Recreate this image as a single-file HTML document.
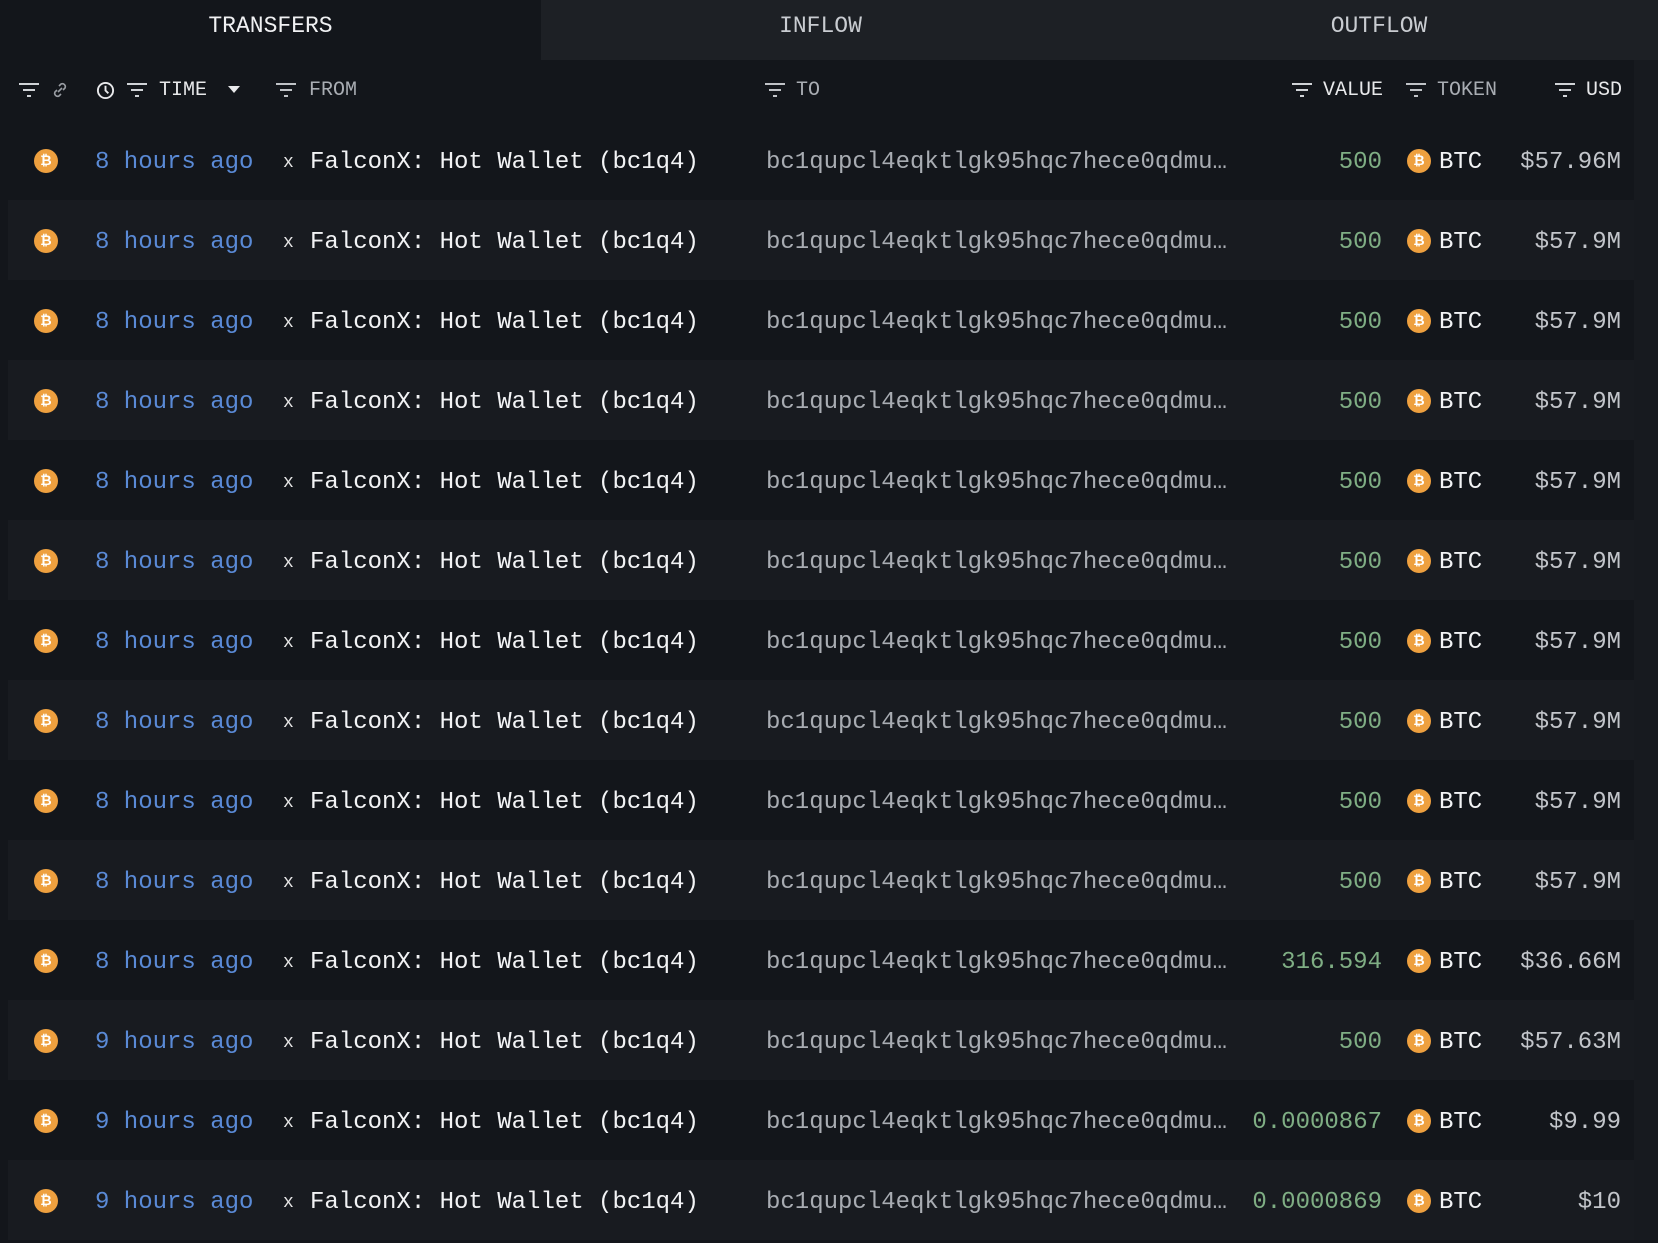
<!DOCTYPE html>
<html><head><meta charset="utf-8"><style>
*{margin:0;padding:0;box-sizing:border-box}
body{width:1658px;height:1240px;background:#13161b;overflow:hidden;position:relative;font-family:"Liberation Mono","DejaVu Sans Mono",monospace}
.tab{position:absolute;top:0;height:60px;line-height:52px;text-align:center;font-size:23px;color:#d8dade}
.t1{left:0;width:541px;background:#13161b;color:#f0f1f3}
.t2{left:541px;width:559px;background:#1d2025;color:#c9ccd1}
.t3{left:1100px;width:558px;background:#1d2025;color:#c9ccd1}
.strip{position:absolute;right:0;top:60px;width:24px;height:1180px;background:#171a1f}
.h{position:absolute;top:79px;font-size:20px;line-height:24px;color:#e8e9eb}
.hg{color:#a9adb3}
.fi{position:absolute;top:82px}
.row{position:absolute;left:0;width:1658px;height:80px;font-size:24px;line-height:80px;padding-top:3px}
.alt{background:#181b20;left:8px;width:1626px}
.row span{position:absolute;white-space:pre;top:3px}
.ic{position:absolute;width:24px;height:24px;border-radius:50%;background:#eea03f;top:29px;color:#fff;font:bold 14px/24px "DejaVu Sans",sans-serif;text-align:center}
.tm{color:#5a8ad6}
.x{font-size:18px;color:#e6e6e6}
.fr{color:#f2f3f5}
.to{color:#a8acb2}
.v{color:#7fae84;text-align:right}
.btc{color:#f2f3f5}
.usd{color:#c2c5ca;text-align:right}
</style></head><body>
<div class="tab t1">TRANSFERS</div>
<div class="tab t2">INFLOW</div>
<div class="tab t3">OUTFLOW</div>
<div class="strip"></div>

<svg class="fi" style="left:18px" width="22" height="16" viewBox="0 0 22 16"><g stroke="#d0d3d7" stroke-width="2"><line x1="1" y1="2" x2="21" y2="2"/><line x1="5" y1="8" x2="17" y2="8"/><line x1="9" y1="14" x2="13" y2="14"/></g></svg>
<svg class="fi" style="left:50px;top:80px" width="20" height="20" viewBox="0 0 20 20"><g fill="none" stroke="#9a9ea4" stroke-width="1.6"><path d="M8 12l4-4"/><path d="M9 6l2-2a3 3 0 0 1 4 4l-2 2"/><path d="M11 14l-2 2a3 3 0 0 1-4-4l2-2"/></g></svg>
<svg class="fi" style="left:96px;top:81px" width="19" height="19" viewBox="0 0 20 20"><g fill="none" stroke="#e8e9eb" stroke-width="2"><circle cx="10" cy="10" r="8"/><path d="M10 5v5l3 3"/></g></svg>
<svg class="fi" style="left:126px" width="22" height="16" viewBox="0 0 22 16"><g stroke="#d0d3d7" stroke-width="2"><line x1="1" y1="2" x2="21" y2="2"/><line x1="5" y1="8" x2="17" y2="8"/><line x1="9" y1="14" x2="13" y2="14"/></g></svg>
<div class="h" style="left:159px">TIME</div>
<svg class="fi" style="left:228px;top:86px" width="12" height="8" viewBox="0 0 12 8"><path d="M0 0h12L6 7z" fill="#e8e9eb"/></svg>
<svg class="fi" style="left:275px" width="22" height="16" viewBox="0 0 22 16"><g stroke="#c0c3c7" stroke-width="2"><line x1="1" y1="2" x2="21" y2="2"/><line x1="5" y1="8" x2="17" y2="8"/><line x1="9" y1="14" x2="13" y2="14"/></g></svg>
<div class="h hg" style="left:309px">FROM</div>
<svg class="fi" style="left:764px" width="22" height="16" viewBox="0 0 22 16"><g stroke="#c0c3c7" stroke-width="2"><line x1="1" y1="2" x2="21" y2="2"/><line x1="5" y1="8" x2="17" y2="8"/><line x1="9" y1="14" x2="13" y2="14"/></g></svg>
<div class="h hg" style="left:796px">TO</div>
<svg class="fi" style="left:1291px" width="22" height="16" viewBox="0 0 22 16"><g stroke="#d0d3d7" stroke-width="2"><line x1="1" y1="2" x2="21" y2="2"/><line x1="5" y1="8" x2="17" y2="8"/><line x1="9" y1="14" x2="13" y2="14"/></g></svg>
<div class="h" style="left:1323px">VALUE</div>
<svg class="fi" style="left:1405px" width="22" height="16" viewBox="0 0 22 16"><g stroke="#c0c3c7" stroke-width="2"><line x1="1" y1="2" x2="21" y2="2"/><line x1="5" y1="8" x2="17" y2="8"/><line x1="9" y1="14" x2="13" y2="14"/></g></svg>
<div class="h hg" style="left:1437px">TOKEN</div>
<svg class="fi" style="left:1554px" width="22" height="16" viewBox="0 0 22 16"><g stroke="#d0d3d7" stroke-width="2"><line x1="1" y1="2" x2="21" y2="2"/><line x1="5" y1="8" x2="17" y2="8"/><line x1="9" y1="14" x2="13" y2="14"/></g></svg>
<div class="h" style="left:1586px">USD</div>

<div class="row" style="top:120px"><div class="ic" style="left:34px">₿</div><span class="tm" style="left:95px">8 hours ago</span><span class="x" style="left:283px">x</span><span class="fr" style="left:310px">FalconX: Hot Wallet (bc1q4)</span><span class="to" style="left:766px">bc1qupcl4eqktlgk95hqc7hece0qdmu…</span><span class="v" style="right:276px">500</span><div class="ic" style="left:1407px">₿</div><span class="btc" style="left:1439px">BTC</span><span class="usd" style="right:37px">$57.96M</span></div>
<div class="row alt" style="top:200px"><div class="ic" style="left:26px">₿</div><span class="tm" style="left:87px">8 hours ago</span><span class="x" style="left:275px">x</span><span class="fr" style="left:302px">FalconX: Hot Wallet (bc1q4)</span><span class="to" style="left:758px">bc1qupcl4eqktlgk95hqc7hece0qdmu…</span><span class="v" style="right:252px">500</span><div class="ic" style="left:1399px">₿</div><span class="btc" style="left:1431px">BTC</span><span class="usd" style="right:13px">$57.9M</span></div>
<div class="row" style="top:280px"><div class="ic" style="left:34px">₿</div><span class="tm" style="left:95px">8 hours ago</span><span class="x" style="left:283px">x</span><span class="fr" style="left:310px">FalconX: Hot Wallet (bc1q4)</span><span class="to" style="left:766px">bc1qupcl4eqktlgk95hqc7hece0qdmu…</span><span class="v" style="right:276px">500</span><div class="ic" style="left:1407px">₿</div><span class="btc" style="left:1439px">BTC</span><span class="usd" style="right:37px">$57.9M</span></div>
<div class="row alt" style="top:360px"><div class="ic" style="left:26px">₿</div><span class="tm" style="left:87px">8 hours ago</span><span class="x" style="left:275px">x</span><span class="fr" style="left:302px">FalconX: Hot Wallet (bc1q4)</span><span class="to" style="left:758px">bc1qupcl4eqktlgk95hqc7hece0qdmu…</span><span class="v" style="right:252px">500</span><div class="ic" style="left:1399px">₿</div><span class="btc" style="left:1431px">BTC</span><span class="usd" style="right:13px">$57.9M</span></div>
<div class="row" style="top:440px"><div class="ic" style="left:34px">₿</div><span class="tm" style="left:95px">8 hours ago</span><span class="x" style="left:283px">x</span><span class="fr" style="left:310px">FalconX: Hot Wallet (bc1q4)</span><span class="to" style="left:766px">bc1qupcl4eqktlgk95hqc7hece0qdmu…</span><span class="v" style="right:276px">500</span><div class="ic" style="left:1407px">₿</div><span class="btc" style="left:1439px">BTC</span><span class="usd" style="right:37px">$57.9M</span></div>
<div class="row alt" style="top:520px"><div class="ic" style="left:26px">₿</div><span class="tm" style="left:87px">8 hours ago</span><span class="x" style="left:275px">x</span><span class="fr" style="left:302px">FalconX: Hot Wallet (bc1q4)</span><span class="to" style="left:758px">bc1qupcl4eqktlgk95hqc7hece0qdmu…</span><span class="v" style="right:252px">500</span><div class="ic" style="left:1399px">₿</div><span class="btc" style="left:1431px">BTC</span><span class="usd" style="right:13px">$57.9M</span></div>
<div class="row" style="top:600px"><div class="ic" style="left:34px">₿</div><span class="tm" style="left:95px">8 hours ago</span><span class="x" style="left:283px">x</span><span class="fr" style="left:310px">FalconX: Hot Wallet (bc1q4)</span><span class="to" style="left:766px">bc1qupcl4eqktlgk95hqc7hece0qdmu…</span><span class="v" style="right:276px">500</span><div class="ic" style="left:1407px">₿</div><span class="btc" style="left:1439px">BTC</span><span class="usd" style="right:37px">$57.9M</span></div>
<div class="row alt" style="top:680px"><div class="ic" style="left:26px">₿</div><span class="tm" style="left:87px">8 hours ago</span><span class="x" style="left:275px">x</span><span class="fr" style="left:302px">FalconX: Hot Wallet (bc1q4)</span><span class="to" style="left:758px">bc1qupcl4eqktlgk95hqc7hece0qdmu…</span><span class="v" style="right:252px">500</span><div class="ic" style="left:1399px">₿</div><span class="btc" style="left:1431px">BTC</span><span class="usd" style="right:13px">$57.9M</span></div>
<div class="row" style="top:760px"><div class="ic" style="left:34px">₿</div><span class="tm" style="left:95px">8 hours ago</span><span class="x" style="left:283px">x</span><span class="fr" style="left:310px">FalconX: Hot Wallet (bc1q4)</span><span class="to" style="left:766px">bc1qupcl4eqktlgk95hqc7hece0qdmu…</span><span class="v" style="right:276px">500</span><div class="ic" style="left:1407px">₿</div><span class="btc" style="left:1439px">BTC</span><span class="usd" style="right:37px">$57.9M</span></div>
<div class="row alt" style="top:840px"><div class="ic" style="left:26px">₿</div><span class="tm" style="left:87px">8 hours ago</span><span class="x" style="left:275px">x</span><span class="fr" style="left:302px">FalconX: Hot Wallet (bc1q4)</span><span class="to" style="left:758px">bc1qupcl4eqktlgk95hqc7hece0qdmu…</span><span class="v" style="right:252px">500</span><div class="ic" style="left:1399px">₿</div><span class="btc" style="left:1431px">BTC</span><span class="usd" style="right:13px">$57.9M</span></div>
<div class="row" style="top:920px"><div class="ic" style="left:34px">₿</div><span class="tm" style="left:95px">8 hours ago</span><span class="x" style="left:283px">x</span><span class="fr" style="left:310px">FalconX: Hot Wallet (bc1q4)</span><span class="to" style="left:766px">bc1qupcl4eqktlgk95hqc7hece0qdmu…</span><span class="v" style="right:276px">316.594</span><div class="ic" style="left:1407px">₿</div><span class="btc" style="left:1439px">BTC</span><span class="usd" style="right:37px">$36.66M</span></div>
<div class="row alt" style="top:1000px"><div class="ic" style="left:26px">₿</div><span class="tm" style="left:87px">9 hours ago</span><span class="x" style="left:275px">x</span><span class="fr" style="left:302px">FalconX: Hot Wallet (bc1q4)</span><span class="to" style="left:758px">bc1qupcl4eqktlgk95hqc7hece0qdmu…</span><span class="v" style="right:252px">500</span><div class="ic" style="left:1399px">₿</div><span class="btc" style="left:1431px">BTC</span><span class="usd" style="right:13px">$57.63M</span></div>
<div class="row" style="top:1080px"><div class="ic" style="left:34px">₿</div><span class="tm" style="left:95px">9 hours ago</span><span class="x" style="left:283px">x</span><span class="fr" style="left:310px">FalconX: Hot Wallet (bc1q4)</span><span class="to" style="left:766px">bc1qupcl4eqktlgk95hqc7hece0qdmu…</span><span class="v" style="right:276px">0.0000867</span><div class="ic" style="left:1407px">₿</div><span class="btc" style="left:1439px">BTC</span><span class="usd" style="right:37px">$9.99</span></div>
<div class="row alt" style="top:1160px"><div class="ic" style="left:26px">₿</div><span class="tm" style="left:87px">9 hours ago</span><span class="x" style="left:275px">x</span><span class="fr" style="left:302px">FalconX: Hot Wallet (bc1q4)</span><span class="to" style="left:758px">bc1qupcl4eqktlgk95hqc7hece0qdmu…</span><span class="v" style="right:252px">0.0000869</span><div class="ic" style="left:1399px">₿</div><span class="btc" style="left:1431px">BTC</span><span class="usd" style="right:13px">$10</span></div>
</body></html>
